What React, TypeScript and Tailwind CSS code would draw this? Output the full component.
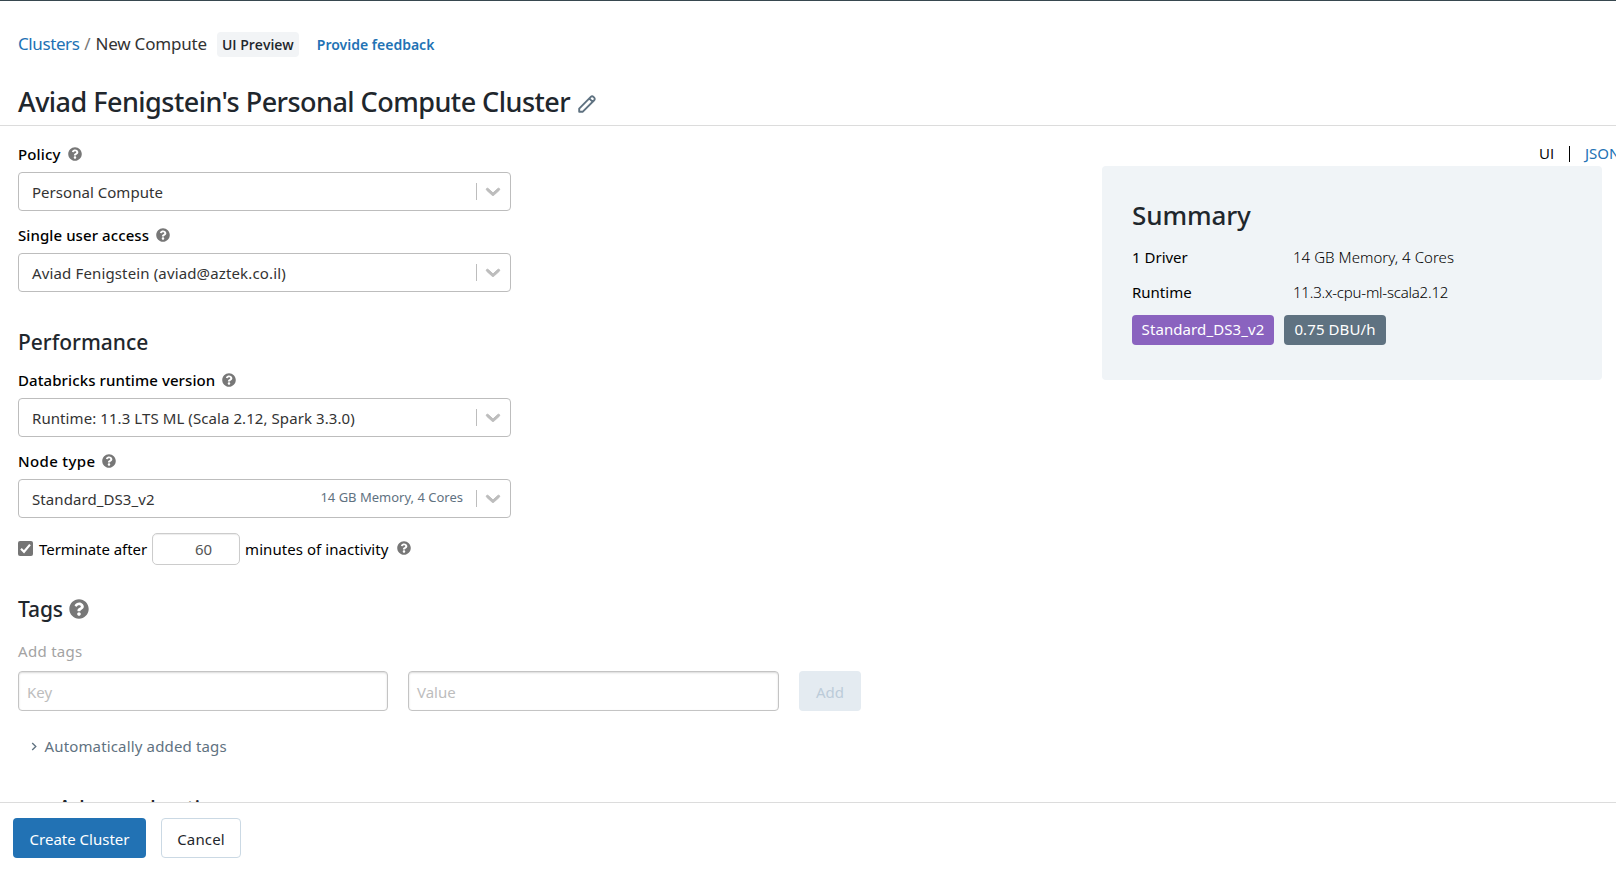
import type { ReactNode } from "react";
import { FaQuestionCircle } from "react-icons/fa";

function Help({ large = false }: { large?: boolean }) {
  return <FaQuestionCircle className={large ? "size-5 text-[#777777]" : "size-[14px] text-[#777777]"} />;
}

function Select({ label, value, hint, valueClass, labelClass = "" }: { label: string; value: string; hint?: string; valueClass: string; labelClass?: string }) {
  return (
    <div>
      <div className="flex h-6 items-center gap-[7px] font-medium text-black">
        <span className={labelClass}>{label}</span>
        <Help />
      </div>
      <div className="mt-1.5 flex h-[39px] w-[493px] items-center rounded-[4px] border border-[#bdbdbd] bg-white pl-[13px] text-[#333333]">
        <span className={`pt-0.5 ${valueClass}`}>{value}</span>
        {hint && <span className="ml-auto mr-[13px] pb-0.5 text-[13px] text-[#5f7281]">{hint}</span>}
        <span className={hint ? "h-[17px] w-px bg-[#bdbdbd]" : "ml-auto h-[17px] w-px bg-[#bdbdbd]"} />
        <svg viewBox="0 0 20 20" className="mr-[7px] mb-px ml-[6px] size-5 shrink-0 fill-[#bdbdbd] stroke-[#bdbdbd] stroke-1">
          <path d="M3.616 7.548c0.436-0.446 1.043-0.481 1.576 0l4.808 4.347 4.808-4.347c0.533-0.481 1.141-0.446 1.574 0 0.436 0.445 0.408 1.197 0 1.615-0.406 0.418-5.595 5.102-5.595 5.102-0.217 0.223-0.502 0.335-0.787 0.335s-0.57-0.112-0.789-0.335c0 0-5.187-4.684-5.595-5.102s-0.436-1.17 0-1.615z" />
        </svg>
      </div>
    </div>
  );
}

function Heading({ children, className }: { children: ReactNode; className: string }) {
  return <h2 className={`flex h-[30px] items-center text-[21px] font-medium text-[#1f272d] ${className}`}>{children}</h2>;
}

export default function App() {
  return (
    <div className="flex h-[872px] w-[1616px] flex-col overflow-hidden border-t border-[#37474f] bg-white font-['Noto_Sans','Open_Sans',sans-serif] text-[15px] whitespace-nowrap text-black">
      <header className="h-[125px] shrink-0 border-b border-[#dcdcdc] pt-[31px] pl-[18px]">
        <div className="flex h-[25px] items-center">
          <div className="flex items-center pb-0.5 text-[17px]">
            <a className="tracking-[-0.4px] text-[#2272b4]">Clusters</a>
            <span className="w-4 text-center text-[#777777]">/</span>
            <span className="tracking-[-0.2px] text-[#333333]">New Compute</span>
          </div>
          <span className="ml-[10px] flex h-[25px] w-[82px] items-center justify-center rounded-[4px] bg-[#f2f4f6] font-['Open_Sans',sans-serif] text-[14px] font-semibold text-[#1f272d]">UI Preview</span>
          <a className="ml-[18px] text-[14px] font-semibold text-[#2272b4]">Provide feedback</a>
        </div>
        <div className="mt-[28px] flex h-[35px] items-center gap-[8px]">
          <h1 className="text-[27px] font-medium tracking-[-0.53px] text-[#1f272d]">Aviad Fenigstein's Personal Compute Cluster</h1>
          <svg viewBox="0 0 18 18" className="mt-0.5 size-[18px] fill-none stroke-[#5f7281] stroke-[1.9]" strokeLinejoin="round">
            <path d="M1.2 16.8V13.6L12.8 1.8a1.8 1.8 0 0 1 2.6 0l0.8 0.8a1.8 1.8 0 0 1 0 2.6L4.6 16.8z M11.4 3.6L14.4 6.6" />
          </svg>
        </div>
      </header>

      <main className="flex min-h-0 flex-1 justify-between overflow-hidden">
        <div className="pt-4 pl-[18px]">
          <div className="flex flex-col gap-3">
            <Select label="Policy" value="Personal Compute" valueClass="tracking-[0.03px]" labelClass="tracking-[0.15px]" />
            <Select label="Single user access" value="Aviad Fenigstein (aviad@aztek.co.il)" valueClass="tracking-[0.14px]" labelClass="tracking-[0.08px]" />
          </div>
          <Heading className="mt-9">Performance</Heading>
          <div className="mt-2.5 flex flex-col gap-3">
            <Select label="Databricks runtime version" value="Runtime: 11.3 LTS ML (Scala 2.12, Spark 3.3.0)" valueClass="tracking-[0.08px]" labelClass="tracking-[0.09px]" />
            <Select label="Node type" value="Standard_DS3_v2" hint="14 GB Memory, 4 Cores" valueClass="tracking-[0.08px]" labelClass="tracking-[0.35px]" />
          </div>
          <div className="mt-[15px] flex h-8 items-center">
            <span className="mb-0.5 flex size-[15px] items-center justify-center rounded-[2px] bg-[#757575]">
              <svg viewBox="0 0 15 15" className="size-[15px] fill-none stroke-white stroke-[2.2]">
                <path d="M3 7.8l3 3L12 3.6" />
              </svg>
            </span>
            <span className="ml-1.5 tracking-[-0.06px]">Terminate after</span>
            <span className="ml-[5px] flex h-8 w-[88px] items-center justify-end rounded-[5px] border border-[#cccccc] pr-[27px] text-[#555555] shadow-[inset_0_1px_1px_rgba(0,0,0,0.075)]">60</span>
            <span className="ml-[5px] tracking-[0.06px]">minutes of inactivity</span>
            <span className="mb-0.5 ml-[9px]"><Help /></span>
          </div>
          <Heading className="mt-[30px] gap-1.5 tracking-[-0.1px]">
            Tags <span className="mb-0.5"><Help large /></span>
          </Heading>
          <div className="mt-3.5 flex h-6 items-center tracking-[0.3px] text-[#a3a3a3]">Add tags</div>
          <div className="mt-2 flex h-10 items-stretch">
            <div className="flex w-[370px] items-center rounded-[4px] border border-[#c4c4c4] pt-0.5 pl-2 text-[#bdbdbd] shadow-[inset_0_1px_2px_rgba(0,0,0,0.15)]">Key</div>
            <div className="ml-5 flex w-[371px] items-center rounded-[4px] border border-[#c4c4c4] pt-0.5 pl-2 text-[#bdbdbd] shadow-[inset_0_1px_2px_rgba(0,0,0,0.15)]">Value</div>
            <button className="ml-5 flex w-[62px] items-center justify-center rounded-[4px] bg-[#e4ebf1] pt-0.5 text-[#bccbd9]">Add</button>
          </div>
          <div className="mt-[23px] flex h-6 items-center pl-[13px] text-[#5f7281]">
            <svg viewBox="0 0 6 10" className="h-[9px] w-1.5 fill-none stroke-current stroke-[1.5]"><path d="M1 1l4 4-4 4" /></svg>
            <span className="ml-[7.5px] tracking-[0.15px]">Automatically added tags</span>
          </div>
          <Heading className="mt-[36px] pl-[13px] tracking-[-0.1px]">
            <svg viewBox="0 0 8 14" className="mb-px h-3.5 w-2 fill-none stroke-current stroke-[1.5]"><path d="M1 1l6 6-6 6" /></svg>
            <span className="ml-[19px]">Advanced options</span>
          </Heading>
        </div>

        <aside className="w-[514px] shrink-0 pt-[15px]">
          <div className="flex h-6 items-center pl-[437px]">
            <span className="w-[30px] shrink-0 font-['Open_Sans',sans-serif]">UI</span>
            <span className="mt-0.5 h-4 w-px shrink-0 bg-black" />
            <a className="ml-[15px] shrink-0 text-[#2272b4]">JSON</a>
          </div>
          <section className="mt-px h-[214px] w-[500px] rounded-[4px] bg-[#f0f4f7] pt-[33px] pl-[30px]">
            <h2 className="flex h-8 items-center text-[26px] font-medium tracking-[-0.1px] text-[#1f272d]">Summary</h2>
            <dl className="mt-[9px] grid auto-rows-[35px] grid-cols-[161px_1fr] items-center">
              <dt>1 Driver</dt>
              <dd className="font-light tracking-[0.04px]">14 GB Memory, 4 Cores</dd>
              <dt>Runtime</dt>
              <dd className="font-light tracking-[-0.22px]">11.3.x-cpu-ml-scala2.12</dd>
            </dl>
            <div className="mt-[5px] flex gap-2.5 text-white">
              <span className="flex h-[30px] w-[142px] items-center justify-center rounded-[4px] bg-[#8a63bf] pb-0.5 tracking-[0.1px]">Standard_DS3_v2</span>
              <span className="flex h-[30px] w-[102px] items-center justify-center rounded-[4px] bg-[#5f7281] pb-0.5 tracking-[0.1px]">0.75 DBU/h</span>
            </div>
          </section>
        </aside>
      </main>

      <footer className="flex h-[70px] shrink-0 gap-[15px] border-t border-[#dcdcdc] pt-[15px] pl-[13px]">
        <button className="h-10 w-[133px] rounded-[4px] bg-[#2272b4] pt-0.5 text-white">Create Cluster</button>
        <button className="h-10 w-[80px] rounded-[4px] border border-[#cbd9e4] pt-0.5 tracking-[0.15px] text-[#1f272d]">Cancel</button>
      </footer>
    </div>
  );
}
